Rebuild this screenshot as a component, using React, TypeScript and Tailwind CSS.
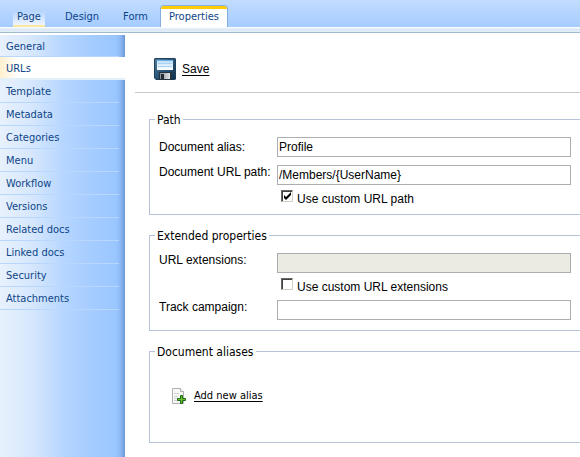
const tabs = ['Design', 'Form'];
const sections = [
  'General', 'URLs', 'Template', 'Metadata', 'Categories', 'Menu',
  'Workflow', 'Versions', 'Related docs', 'Linked docs', 'Security', 'Attachments',
];

const field = 'block h-5 w-full border border-[#abadb3] bg-white px-px text-[12px] leading-4 text-black outline-none disabled:bg-[#ebebe4]';
const group = 'mt-[13px] min-w-0 border border-r-0 border-[#b5c2d8] px-[9px]';
const legend = '-ml-1 h-[15px] px-[2px] font-["DejaVu_Sans_Condensed","DejaVu_Sans",sans-serif] text-[12px] leading-[17px]';

function SaveIcon() {
  return (
    <svg width="22" height="22" viewBox="0 0 22 22" aria-hidden="true">
      <defs>
        <linearGradient id="disk" x1="0" y1="0" x2="1" y2="1">
          <stop offset="0" stopColor="#557f9d" />
          <stop offset="0.5" stopColor="#2b5577" />
          <stop offset="1" stopColor="#102f4c" />
        </linearGradient>
        <linearGradient id="paper" x1="0" y1="0" x2="0" y2="1">
          <stop offset="0" stopColor="#b9ddf8" />
          <stop offset="1" stopColor="#ffffff" />
        </linearGradient>
        <linearGradient id="shutter" x1="0" y1="0" x2="1" y2="0">
          <stop offset="0" stopColor="#8a9299" />
          <stop offset="1" stopColor="#e3e5e6" />
        </linearGradient>
      </defs>
      <path d="M1 0h20l1 1v20l-1 1H2l-2-2V1z" fill="#203f59" />
      <path d="M1.500 1h19l.5.500v19l-.5.500h-18L1 19.500v-18z" fill="url(#disk)" />
      <path d="M3 2h16v10H3z" fill="url(#paper)" />
      <path d="M3 2h16v1H3z" fill="#6cb1e8" />
      <path d="M4 5h14v1H4zM4 8h14v1H4z" fill="#a9d3f4" />
      <path d="M5 14h13v8H5z" fill="#26343f" />
      <path d="M6 15h10v6H6z" fill="url(#shutter)" />
      <path d="M7 16h3v5H7z" fill="#222d36" />
    </svg>
  );
}

function AddDocumentIcon() {
  return (
    <svg width="14" height="16" viewBox="0 0 14 16" aria-hidden="true">
      <path d="M.5.500h8l3 3v12H.5z" fill="#f7f7f7" stroke="#aeb1b3" />
      <path d="M8.500.500v3h3" fill="#ffffff" stroke="#aeb1b3" />
      <path d="M2 5h5v1H2zM2 8h4v1H2zM2 10h3v1H2zM2 12h3v1H2z" fill="#cfd1d2" />
      <path d="M8.500 7.500h2v3h3v2h-3v3h-2v-3h-3v-2h3z" fill="#69c02c" stroke="#1d6b18" />
    </svg>
  );
}

function Check({ label, checked }: { label: string; checked?: boolean }) {
  return (
    <label className="ml-1 flex items-start gap-1">
      <span className="relative size-3">
        <input
          type="checkbox"
          defaultChecked={checked}
          className="peer block size-3 appearance-none border border-t-[#686868] border-l-[#686868] border-r-[#d4d0c8] border-b-[#d4d0c8] bg-white shadow-[inset_1px_1px_#404040]"
        />
        <svg className="pointer-events-none absolute inset-0 hidden peer-checked:block" width="12" height="12" viewBox="0 0 12 12" aria-hidden="true">
          <path d="M3 5l2 2 5-5v3L5 10 3 8z" fill="#000" />
        </svg>
      </span>
      <span className="pt-[2px] leading-[14px]">{label}</span>
    </label>
  );
}

export default function App() {
  return (
    <div className="flex min-h-screen flex-col bg-white font-['Liberation_Sans',Arial,sans-serif] text-[12px] text-black">
      <header>
        <nav className="flex h-[27px] items-end bg-linear-to-b from-[#c2dcff] to-[#a5ccff] font-['DejaVu_Sans_Condensed','DejaVu_Sans',sans-serif] text-[11px] text-[#0e4587]">
          <a href="#page" className="ml-[13px] h-4 border-b-2 border-[#f7e7a0] bg-linear-to-b from-[#b6d4ff] to-[#f0f5fc] px-1 leading-[11px]">Page</a>
          <div className="ml-5 flex gap-6">
            {tabs.map((t) => (
              <a key={t} href={'#' + t} className="h-4 leading-[11px]">{t}</a>
            ))}
          </div>
          <a href="#properties" aria-current="page" className="ml-3 h-[22px] rounded-t-[4px] border border-b-0 border-[#86afdf] bg-white">
            <span className="block h-full rounded-t-[3px] border-t-3 border-[#ffcd05] px-2 leading-[15px]">Properties</span>
          </a>
        </nav>
        <div className="h-[6px] border-b border-[#9fb9cd] bg-linear-to-b from-white via-[#dce9f5] to-[#e2eef8]" />
      </header>
      <div className="flex flex-1 pt-[2px]">
        <aside className="w-[125px] shrink-0 bg-[linear-gradient(90deg,#e8f1fd_0px,#d6e7fd_32px,#b4d5ff_66px,#a3cbff_95px,#9ac6ff_116px,#8ab7f2_121px,#6897d3_125px)] font-['DejaVu_Sans_Condensed','DejaVu_Sans',sans-serif] text-[11px] text-[#0e4587]">
          <ul>
            {sections.map((s) => (
              <li key={s} className="h-[23px] first:h-[22px]">
                {s === 'URLs' ? (
                  <a href="#urls" aria-current="page" className="block h-full border-b-2 border-[#e2f0f7] bg-linear-to-r from-[#fff0ce] to-white to-15% pl-[6px] leading-[24px]">{s}</a>
                ) : (
                  <a href={'#' + s} className="mr-[6px] block h-full border-b border-[#b9d7fd] pl-[6px] leading-[24px]">{s}</a>
                )}
              </li>
            ))}
          </ul>
        </aside>
        <main className="min-w-0 flex-1 pb-[14px] pl-6">
          <div className="-ml-[14px] mb-[19px] flex h-[58px] items-center gap-[6px] border-b border-[#c8c8c8] pt-[11px] pl-[19px]">
            <SaveIcon />
            <a href="#save" className="underline underline-offset-2">Save</a>
          </div>

          <fieldset className={group + ' mt-0'}>
            <legend className={legend}>Path</legend>
            <div className="grid grid-cols-[118px_1fr] pt-[10px] pb-2">
              <label htmlFor="alias" className="leading-5">Document alias:</label>
              <input id="alias" className={field} defaultValue="Profile" />
              <label htmlFor="path" className="mt-2 leading-[14px] whitespace-nowrap">Document URL path:</label>
              <input id="path" className={field + ' mt-2'} defaultValue="/Members/{UserName}" />
              <div className="col-start-2 mt-[5px]"><Check label="Use custom URL path" checked /></div>
            </div>
          </fieldset>

          <fieldset className={group}>
            <legend className={legend}>Extended properties</legend>
            <div className="grid grid-cols-[118px_1fr] py-[10px]">
              <label htmlFor="extensions" className="leading-[14px]">URL extensions:</label>
              <input id="extensions" className={field} disabled />
              <div className="col-start-2 mt-[5px]"><Check label="Use custom URL extensions" /></div>
              <label htmlFor="campaign" className="mt-[6px] leading-[14px]">Track campaign:</label>
              <input id="campaign" className={field + ' mt-[6px]'} />
            </div>
          </fieldset>

          <fieldset className={group}>
            <legend className={legend}>Document aliases</legend>
            <div className="flex items-center gap-2 pt-[29px] pb-[38px] pl-[13px]">
              <AddDocumentIcon />
              <a href="#add" className="font-['DejaVu_Sans_Condensed','DejaVu_Sans',sans-serif] text-[11px] leading-4 underline underline-offset-2">Add new alias</a>
            </div>
          </fieldset>
        </main>
      </div>
    </div>
  );
}
